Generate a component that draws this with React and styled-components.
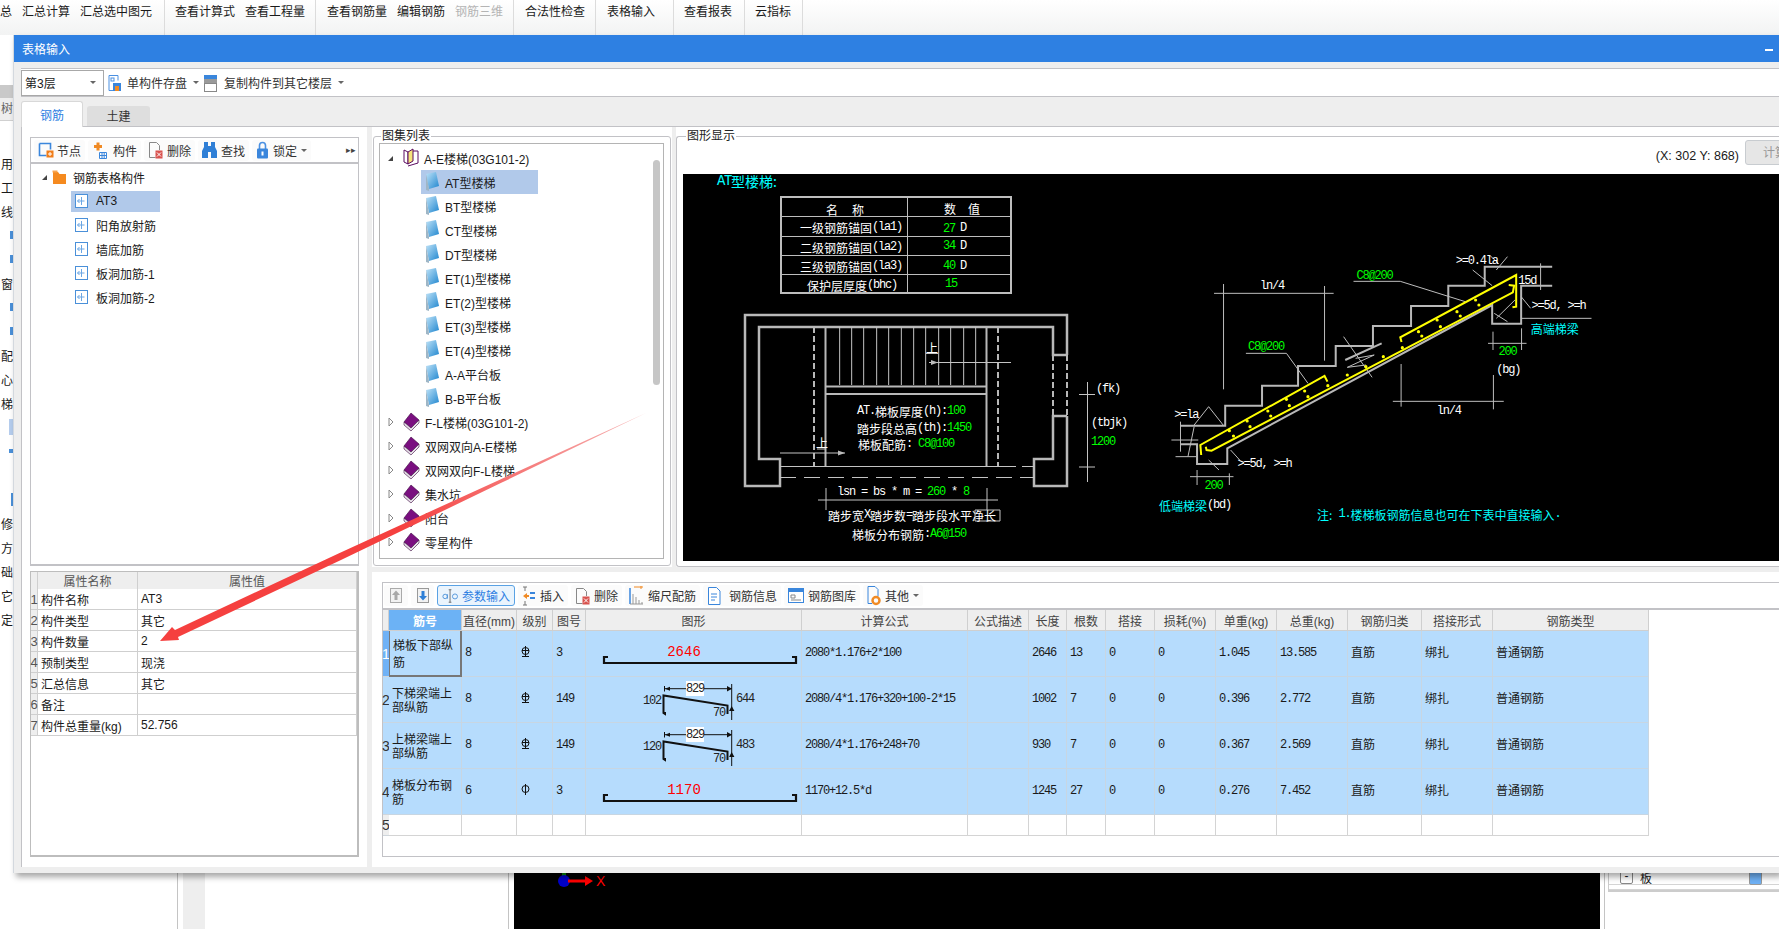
import styled, { createGlobalStyle } from 'styled-components';

const UI_FONT = '"Liberation Sans", "Noto Sans CJK SC", sans-serif';
const CJK_FONT = '"Noto Sans CJK SC", sans-serif';
const MONO_FONT = '"Liberation Mono", "Noto Sans CJK SC", monospace';
const LINE = '#c2c2c6';
const COLS = '6px 73px 55px 36px 33px 216px 166px 61px 38px 39px 49px 61px 61px 71px 74px 71px 156px';

const GlobalStyle = createGlobalStyle`
  html, body { margin: 0; padding: 0; width: 1779px; height: 929px; overflow: hidden; background: #fff; }
  body { font: 12px ${UI_FONT}; color: #1a1a1a; }
  * { box-sizing: border-box; }
`;

const Page = styled.div`
  position: relative;
  width: 1779px;
  height: 929px;
  overflow: hidden;
`;

/* main ribbon, behind the window */
const Ribbon = styled.div`
  display: flex;
  height: 35px;
  background: linear-gradient(#fff, #f2f3f3);
`;

const RibbonGroup = styled.div`
  display: flex;
  align-items: flex-start;
  gap: 10px;
  width: ${(p) => p.$w}px;
  padding: 4px 0 0 ${(p) => p.$pad}px;
  border-right: 1px solid #dcdcdc;
  white-space: nowrap;
  line-height: 16px;
`;

const RibbonItem = styled.span`
  color: ${(p) => (p.$off ? '#b4b4b4' : '#1a1a1a')};
`;

const Backdrop = styled.div`
  display: flex;
  height: 894px;
`;

const Sidebar = styled.div`
  width: 177px;
  display: flex;
  flex-direction: column;
`;

const SideGap = styled.div`
  height: 50px;
`;

const SideBand = styled.div`
  height: 13px;
  width: 13px;
  background: #c9c9c9;
`;

const SideHead = styled.div`
  height: 23px;
  width: 13px;
  background: #eee;
  border-bottom: 1px solid #d0d0d0;
  color: #666;
  line-height: 22px;
  text-align: right;
`;

const SideList = styled.div`
  width: 13px;
  padding-top: 30px;
`;

const SideRow = styled.div`
  height: 24px;
  display: flex;
  justify-content: flex-end;
  align-items: center;
  overflow: hidden;
  white-space: nowrap;
`;

const SideMark = styled.span`
  width: ${(p) => p.$w || 3}px;
  height: ${(p) => p.$h || 8}px;
  background: ${(p) => p.$c || '#4a90d9'};
`;

const BackGutter = styled.div`
  width: 28px;
  padding-left: 5px;
  border-left: 1px solid #c4c4c4;
  &::after {
    content: '';
    display: block;
    width: 22px;
    height: 100%;
    background: #eee;
  }
`;

const BackBlank = styled.div`
  width: 304px;
  border-right: 1px solid #c4c4c4;
`;

const BlackView = styled.div`
  position: relative;
  width: 1086px;
  margin-left: 5px;
  background: #000;
`;

const AxisMark = styled.svg`
  position: absolute;
  left: 36px;
  top: 836px;
`;

const AxisLabel = styled.span`
  position: absolute;
  left: 82px;
  top: 838px;
  color: #f00;
  font-size: 14px;
  line-height: 16px;
`;

const Dock = styled.div`
  flex: 1;
  margin-left: 4px;
  padding-left: 3px;
  border-left: 1px solid #c4c4c4;
`;

const DockTable = styled.div`
  height: 857px;
  display: flex;
  flex-direction: column;
  justify-content: flex-end;
  border-left: 1px solid #ccc;
  border-bottom: 2px solid #ccc;
`;

const DockRow = styled.div`
  display: flex;
  align-items: center;
  height: ${(p) => p.$h}px;
  padding-left: 11px;
  gap: 7px;
  border-bottom: 1px solid #d4d4d4;
`;

const DockBox = styled.span`
  width: 13px;
  height: 13px;
  border: 1px solid #888;
  border-radius: 2px;
  text-align: center;
  line-height: 8px;
`;

const DockCheck = styled.span`
  margin-left: 90px;
  width: 13px;
  height: 14px;
  background: #6fb1f5;
  border: 1px solid #999;
  border-radius: 2px;
`;

/* table-input window */
const Window = styled.div`
  position: absolute;
  left: 13px;
  top: 35px;
  right: 0;
  height: 838px;
  display: flex;
  flex-direction: column;
  background: #eee;
  border-left: 1px solid #d3d8de;
  box-shadow: 3px 4px 6px rgba(0, 0, 0, 0.35);
`;

const TitleBar = styled.div`
  height: 27px;
  flex: none;
  display: flex;
  justify-content: space-between;
  align-items: center;
  padding: 0 6px 0 8px;
  background: #2e80e2;
  color: #fff;
`;

const MinButton = styled.span`
  width: 8px;
  height: 2px;
  margin-top: 3px;
  background: #fff;
`;

const WindowBody = styled.div`
  flex: 1;
  min-height: 0;
  display: flex;
  flex-direction: column;
  padding: 6px 0 6px 7px;
`;

const LayerBar = styled.div`
  height: 29px;
  flex: none;
  display: flex;
  align-items: center;
  gap: 4px;
  background: #fff;
  border-top: 1px solid ${LINE};
  border-bottom: 1px solid ${LINE};
`;

const LayerSelect = styled.div`
  width: 83px;
  height: 26px;
  margin-right: 0;
  display: flex;
  align-items: center;
  justify-content: space-between;
  padding: 0 7px 0 3px;
  border: 1px solid #a8a8a8;
`;

const Caret = styled.span`
  width: 0;
  height: 0;
  flex: none;
  border-left: 3px solid transparent;
  border-right: 3px solid transparent;
  border-top: 3px solid #666;
`;

const BarAction = styled.div`
  display: flex;
  align-items: center;
  gap: 6px;
  white-space: nowrap;
  color: #333;
`;

const TabStrip = styled.div`
  height: 29px;
  flex: none;
  display: flex;
  align-items: flex-end;
  gap: 4px;
`;

const Tab = styled.div`
  width: ${(p) => (p.$active ? 62 : 63)}px;
  height: ${(p) => (p.$active ? 26 : 20)}px;
  margin-bottom: ${(p) => (p.$active ? -1 : 0)}px;
  text-align: center;
  line-height: ${(p) => (p.$active ? 28 : 22)}px;
  border-radius: 3px 3px 0 0;
  background: ${(p) => (p.$active ? '#fff' : '#dedede')};
  border: ${(p) => (p.$active ? `1px solid #d8d8d8` : 'none')};
  border-bottom: none;
  color: ${(p) => (p.$active ? '#2e80e2' : '#333')};
  position: relative;
  z-index: 1;
`;

const Content = styled.div`
  flex: 1;
  min-height: 0;
  display: flex;
  background: #fff;
  border-top: 1px solid ${LINE};
  border-left: 1px solid ${LINE};
`;

const LeftPane = styled.div`
  width: 345px;
  flex: none;
  display: flex;
  flex-direction: column;
  gap: 5px;
  padding: 10px 8px 10px 8px;
`;

const PaneStack = styled.div`
  flex: 1;
  min-height: 0;
  display: flex;
  flex-direction: column;
`;

const Splitter = styled.div`
  flex: none;
  background: #eee;
  ${(p) => (p.$row ? 'height: 5px;' : `width: ${p.$w || 5}px;`)}
`;

const SmallBar = styled.div`
  height: 27px;
  flex: none;
  display: flex;
  align-items: center;
  gap: 3px;
  padding-left: 3px;
  border: 1px solid ${LINE};
  border-bottom: 2px solid ${LINE};
  border-right: 1px solid ${LINE};
`;

const ToolButton = styled.div`
  height: 21px;
  display: flex;
  align-items: center;
  gap: ${(p) => p.$gap ?? 4}px;
  padding: 0 4px;
  border-radius: 3px;
  white-space: nowrap;
  color: ${(p) => (p.$active ? '#2e80e2' : '#333')};
  background: ${(p) => (p.$active ? '#eaf4fd' : '#fbfbfb')};
  border: ${(p) => (p.$active ? '1px solid #5aa2e4' : 'none')};
`;

const MoreMark = styled.span`
  margin-left: auto;
  margin-right: 2px;
  font-size: 9px;
  color: #444;
`;

const TreeBox = styled.div`
  flex: 1;
  min-height: 0;
  padding-top: 1px;
  border: 1px solid ${LINE};
  border-top: none;
  border-bottom-width: 2px;
`;

const TreeRow = styled.div`
  height: 24px;
  display: flex;
  align-items: center;
  padding-left: ${(p) => p.$indent}px;
  white-space: nowrap;
`;

const TreeItem = styled.div`
  display: flex;
  align-items: center;
  gap: ${(p) => p.$gap}px;
  height: ${(p) => p.$h}px;
  width: ${(p) => (p.$w ? `${p.$w}px` : 'auto')};
  padding-left: ${(p) => p.$pad ?? 4}px;
  background: ${(p) => (p.$selected ? '#b1c9ea' : 'transparent')};
`;

const PropBox = styled.div`
  height: 286px;
  flex: none;
  border: 1px solid #bdbdbd;
  border-width: 1px 2px 2px 1px;
`;

const PropRow = styled.div`
  display: grid;
  grid-template-columns: 7px 100px 1fr;
  height: ${(p) => (p.$head ? 17 : 21)}px;
`;

const PropCell = styled.div`
  display: flex;
  align-items: center;
  justify-content: ${(p) => (p.$center ? 'center' : 'flex-start')};
  padding-left: ${(p) => (p.$center ? 0 : 3)}px;
  background: ${(p) => (p.$shade ? '#eee' : '#fff')};
  color: ${(p) => (p.$shade ? '#555' : '#1a1a1a')};
  font-size: ${(p) => (p.$index ? 13 : 12)}px;
  border-right: 1px solid #cfcfcf;
  border-bottom: 1px solid #cfcfcf;
  white-space: nowrap;
`;

const TopArea = styled.div`
  height: 440px;
  flex: none;
  display: flex;
`;

const AtlasArea = styled.div`
  width: 300px;
  flex: none;
  padding: 9px 1px 1px;
`;

const Group = styled.div`
  position: relative;
  height: 100%;
  border: 1px solid ${LINE};
  border-radius: 3px;
  ${(p) => p.$open && 'border-right: none; border-radius: 3px 0 0 3px;'}
`;

const GroupTitle = styled.span`
  position: absolute;
  top: -9px;
  left: ${(p) => p.$left}px;
  height: 16px;
  padding: 0 1px;
  background: #fff;
  line-height: 16px;
  color: #222;
`;

const AtlasTree = styled.div`
  position: relative;
  margin: 6px 6px 6px 5px;
  height: calc(100% - 12px);
  padding-top: 2px;
  border: 1px solid #b4b4b4;
`;

const ScrollThumb = styled.div`
  position: absolute;
  top: 16px;
  right: 3px;
  width: 7px;
  height: 225px;
  border-radius: 4px;
  background: #c6c6c6;
`;

const GraphArea = styled.div`
  flex: 1;
  min-width: 0;
  padding-top: 9px;
`;

const GraphHead = styled.div`
  height: 37px;
  display: flex;
  justify-content: flex-end;
  align-items: center;
  gap: 6px;
  font-size: 12.5px;
  white-space: nowrap;
`;

const CalcButton = styled.div`
  width: 60px;
  height: 25px;
  flex: none;
  margin-right: -26px;
  margin-top: -6px;
  text-align: center;
  font-size: 12px;
  line-height: 24px;
  color: #999;
  background: #e6e6e6;
  border: 1px solid #c8ccd0;
  border-radius: 3px;
`;

const GraphStage = styled.div`
  height: 387px;
  margin-left: 6px;
  background: #000;
`;

const Canvas = styled.svg`
  display: block;
`;

const CadText = styled.text`
  font-family: ${CJK_FONT};
  font-size: ${(p) => p.$size || 12}px;
  fill: ${(p) => p.$fill || '#fff'};
  dominant-baseline: central;
`;

const Lat = styled.tspan`
  font-family: ${MONO_FONT};
  font-size: ${(p) => p.$size || 12}px;
  letter-spacing: ${(p) => (p.$size ? -1.4 : -1.2)}px;
  fill: ${(p) => p.$fill || 'inherit'};
`;

const LowerPane = styled.div`
  flex: 1;
  min-height: 0;
  padding: 10px 0 10px 10px;
`;

const RebarBox = styled.div`
  height: 100%;
  border: 1px solid ${LINE};
  border-right: none;
`;

const RebarBar = styled.div`
  height: 27px;
  display: flex;
  align-items: center;
  gap: 3px;
  padding-left: 1px;
  border-bottom: 2px solid ${LINE};
`;

const SquareButton = styled.div`
  width: ${(p) => p.$w}px;
  height: 21px;
  display: flex;
  align-items: center;
  justify-content: center;
  background: #fbfbfb;
  border-radius: 3px;
`;

const GridRow = styled.div`
  display: grid;
  grid-template-columns: ${COLS};
  width: 1266px;
  height: ${(p) => p.$h}px;
`;

const HeadCell = styled.div`
  display: flex;
  align-items: center;
  justify-content: center;
  font-family: ${UI_FONT};
  background: ${(p) => (p.$selected ? '#6cb2f5' : '#eee')};
  color: ${(p) => (p.$selected ? '#fff' : '#444')};
  font-weight: ${(p) => (p.$selected ? 700 : 400)};
  border-right: 1px solid #cfcfcf;
  border-bottom: 1px solid #cfcfcf;
  white-space: nowrap;
`;

const NumCell = styled.div`
  display: flex;
  align-items: center;
  justify-content: center;
  font-size: 14px;
  color: ${(p) => (p.$selected ? '#fff' : '#333')};
  background: ${(p) => (p.$selected ? '#70b2f6' : p.$blue ? '#b6dcfd' : '#eee')};
  border-bottom: 1px solid #cfd6dc;
`;

const Cell = styled.div`
  display: flex;
  align-items: center;
  padding: 0 0 ${(p) => (p.$mono ? 2 : 5)}px 3px;
  font-family: ${(p) => (p.$mono ? MONO_FONT : CJK_FONT)};
  letter-spacing: ${(p) => (p.$mono ? '-1.2px' : 'normal')};
  background: ${(p) => (p.$blue ? '#b6dcfd' : '#fff')};
  border-right: 1px solid ${(p) => (p.$blue ? '#c8d6e2' : '#d4d4d4')};
  border-bottom: 1px solid ${(p) => (p.$blue ? '#c8d6e2' : '#d4d4d4')};
  white-space: nowrap;
  overflow: hidden;
`;

const NameCell = styled.div`
  display: flex;
  align-items: center;
  padding: 0 6px 0 3px;
  font-family: ${CJK_FONT};
  line-height: ${(p) => (p.$selected ? 17 : 14)}px;
  background: ${(p) => (p.$blue ? '#b6dcfd' : '#fff')};
  border-right: ${(p) => (p.$selected ? '2px solid #777' : '1px solid #c8d6e2')};
  border-bottom: ${(p) => (p.$selected ? '2px solid #777' : '1px solid #c8d6e2')};
  border-left: ${(p) => (p.$selected ? '1px solid #777' : 'none')};
`;

const FigCell = styled.div`
  background: #b6dcfd;
  border-right: 1px solid #c8d6e2;
  border-bottom: 1px solid #c8d6e2;
  overflow: hidden;
`;

const FigText = styled.text`
  font-family: ${MONO_FONT};
  font-size: ${(p) => p.$size || 12}px;
  letter-spacing: ${(p) => (p.$size ? '0' : '-1.2px')};
  fill: ${(p) => p.$fill || '#222'};
  dominant-baseline: central;
  text-anchor: ${(p) => p.$anchor || 'start'};
`;

const ArrowLayer = styled.svg`
  position: absolute;
  left: 0;
  top: 0;
  pointer-events: none;
`;

/* small icons */
const Node = () => (
  <svg width="16" height="16" viewBox="0 0 16 16">
    <path d="M1.5 1.5h11v6M1.5 1.5v12h7" fill="none" stroke="#3a86dc" strokeWidth="1.6" />
    <rect x="8.5" y="8.5" width="7" height="7" fill="#f07d1a" />
    <path d="M12 10v4M10 12h4" stroke="#fff" />
  </svg>
);
const Piece = () => (
  <svg width="15" height="18" viewBox="0 0 15 18">
    <path d="M2 4h2.5V1.5h3V4H10v3H7.5v2.500h-3V7H2z" fill="#f08a24" />
    <path d="M7.500 11.500h7v6h-7zM7.500 14.500h7M10 11.500v6M12.200 11.500v6" fill="none" stroke="#3a86dc" />
  </svg>
);
const Remove = () => (
  <svg width="15" height="18" viewBox="0 0 15 18">
    <path d="M1.500 1.500h7l3 3V9M1.500 1.500v15h6" fill="none" stroke="#888" />
    <rect x="7.500" y="9.500" width="7" height="8" fill="#d9534f" />
    <path d="M9 11.500l4 4M13 11.500l-4 4" stroke="#fff" />
  </svg>
);
const Find = () => (
  <svg width="15" height="18" viewBox="0 0 15 18">
    <path d="M2 1h4v4h3V1h4v5l2 4v7H9V11H6v6H0v-7l2-4z" fill="#2f7fd6" />
  </svg>
);
const Lock = () => (
  <svg width="13" height="18" viewBox="0 0 13 18">
    <path d="M3.500 8V4.500a3 3 0 0 1 6 0V8" fill="none" stroke="#4a90e2" strokeWidth="1.600" />
    <rect x="1" y="7.500" width="11" height="10" rx="1" fill="#3a86dc" />
    <rect x="5.500" y="10.500" width="2" height="4" fill="#fff" />
  </svg>
);
const SaveDisk = () => (
  <svg width="13" height="18" viewBox="0 0 13 18">
    <path d="M1 1.500h9v5M1 1.500v15h5" fill="none" stroke="#4a90e2" />
    <rect x="3" y="4" width="3" height="3" fill="none" stroke="#4a90e2" />
    <rect x="5" y="9" width="8" height="8" fill="#3a86dc" />
    <rect x="7" y="12" width="4" height="5" fill="#f08a24" />
  </svg>
);
const CopyFloor = () => (
  <svg width="15" height="18" viewBox="0 0 15 18">
    <rect x="1" y="1" width="13" height="4" fill="#3a86dc" />
    <rect x="1" y="5" width="13" height="4" fill="#9a9a9a" />
    <rect x="1.500" y="9.500" width="12" height="8" fill="#fff" stroke="#888" />
  </svg>
);
const Folder = () => (
  <svg width="15" height="14" viewBox="0 0 15 14">
    <path d="M1 2h5l1.500 2H14v10H1z" fill="#f58a1f" />
    <path d="M0.500 0.500h5v2h-5z" fill="#f8a54f" />
  </svg>
);
const ChildIcon = () => (
  <svg width="13" height="14" viewBox="0 0 13 14">
    <rect x="0.500" y="0.500" width="12" height="13" fill="#fff" stroke="#4a90d9" />
    <path d="M6.500 3v8M2.500 7h7M2.500 7l2-2M2.500 7l2 2" fill="none" stroke="#6aa6e4" />
  </svg>
);
const DocIcon = () => (
  <svg width="14" height="20" viewBox="0 0 14 20">
    <defs>
      <linearGradient id="docFill" x1="0" y1="0" x2="1" y2="1">
        <stop offset="0" stopColor="#bfe3f8" />
        <stop offset="1" stopColor="#1f86cf" />
      </linearGradient>
    </defs>
    <path d="M1 2l10-2 3 14-10 3z" fill="url(#docFill)" />
    <path d="M1 2v16l3 1v-2z" fill="#9fb6c6" />
  </svg>
);
const BookClosed = () => (
  <svg width="17" height="20" viewBox="0 0 17 20">
    <path d="M8 1l8 7-8 8-7-6z" fill="#7a0f80" stroke="#3d0840" strokeWidth="0.600" />
    <path d="M1 10v3l7 6 8-8V8l-8 8z" fill="#e6e0e8" stroke="#3d0840" strokeWidth="0.600" />
  </svg>
);
const BookOpen = () => (
  <svg width="16" height="20" viewBox="0 0 16 20">
    <path d="M1 2l4 2v12l-4-2z" fill="#fff" stroke="#5a0a60" />
    <path d="M5 4l5-3v12l-5 3z" fill="#f5e27a" stroke="#5a0a60" />
    <path d="M10 3h5v12l-10 3" fill="none" stroke="#5a0a60" />
  </svg>
);
const Opened = () => (
  <svg width="7" height="7" viewBox="0 0 7 7">
    <path d="M6 1v5H1z" fill="#444" />
  </svg>
);
const Closed = () => (
  <svg width="6" height="10" viewBox="0 0 6 10">
    <path d="M1 1l4 4-4 4z" fill="#fff" stroke="#888" />
  </svg>
);
const MoveUp = () => (
  <svg width="12" height="15" viewBox="0 0 12 15">
    <rect x="0.500" y="0.500" width="11" height="14" fill="#f2f2f2" stroke="#aaa" />
    <path d="M6 2.500L10 7H7.500v5h-3V7H2z" fill="#a8a8a8" />
  </svg>
);
const MoveDown = () => (
  <svg width="12" height="15" viewBox="0 0 12 15">
    <rect x="0.500" y="0.500" width="11" height="14" fill="#f2f2f2" stroke="#999" />
    <path d="M6 12.500L10 8H7.500V3h-3v5H2z" fill="#2f7fd6" />
  </svg>
);
const ParamIcon = () => (
  <svg width="17" height="16" viewBox="0 0 19 16">
    <circle cx="3.500" cy="8.500" r="2.500" fill="none" stroke="#4a90d9" />
    <path d="M6 6v5" stroke="#4a90d9" />
    <path d="M9 1v14M7.500 1h3M7.500 15h3" stroke="#666" />
    <circle cx="14.500" cy="8.500" r="2.800" fill="none" stroke="#4a90d9" />
  </svg>
);
const InsertIcon = () => (
  <svg width="13" height="20" viewBox="0 0 13 20">
    <path d="M1 1h4M3 1v4M3 15v4M1 19h4" stroke="#777" />
    <path d="M1 10l4-3v2h2v2H5v2z" fill="#f08a24" />
    <path d="M8 7h5M8 12h5" stroke="#3a86dc" strokeWidth="2" />
  </svg>
);
const RulerIcon = () => (
  <svg width="15" height="19" viewBox="0 0 15 19">
    <path d="M5 1h9M12 0v3" stroke="#f08a24" />
    <path d="M1 2v16" stroke="#3a86dc" strokeWidth="1.500" />
    <path d="M4 8v10M7 11v7M10 14v4M13 16v2M1 18h13" stroke="#999" />
  </svg>
);
const InfoIcon = () => (
  <svg width="15" height="18" viewBox="0 0 15 18">
    <path d="M1.500 0.500h8l3.500 3.500v13.500h-11.500z" fill="#fff" stroke="#3a86dc" />
    <path d="M4 7h6M4 10h6M4 13h4" stroke="#3a86dc" />
  </svg>
);
const LibraryIcon = () => (
  <svg width="16" height="15" viewBox="0 0 16 15">
    <rect x="0.500" y="0.500" width="15" height="14" fill="#fff" stroke="#3a86dc" />
    <rect x="1" y="1" width="14" height="3" fill="#3a86dc" />
    <path d="M3 7h4v3H3zM3 12h10" fill="none" stroke="#888" />
  </svg>
);
const OtherIcon = () => (
  <svg width="14" height="20" viewBox="0 0 14 20">
    <path d="M1 0.500h7l3 3v7M1 0.500v17h4" fill="none" stroke="#3a86dc" />
    <circle cx="9" cy="14.500" r="3.500" fill="none" stroke="#f08a24" strokeWidth="2.500" />
  </svg>
);
const Grade = ({ foot }) => (
  <svg width="11" height="13" viewBox="0 0 11 13">
    <circle cx="5.500" cy="6" r="3.500" fill="none" stroke="#111" />
    <path d="M5.500 1v11" stroke="#111" />
    {foot && <path d="M2 11.500h7M2 5.500l7 0" stroke="#111" />}
  </svg>
);

const sideRows = [
  '用', '工', '线', 'm', 'm', '窗', 'm', 'm', '配', '心', '梯',
  'box', 'tick', '', 'bar', '修', '方', '础', '它', '定',
];
const ribbon = [
  { w: 165, pad: 0, items: ['总', '汇总计算', '汇总选中图元'] },
  { w: 151, pad: 10, items: ['查看计算式', '查看工程量'] },
  { w: 198, pad: 11, items: ['查看钢筋量', '编辑钢筋', '钢筋三维'] },
  { w: 82, pad: 11, items: ['合法性检查'] },
  { w: 78, pad: 11, items: ['表格输入'] },
  { w: 71, pad: 10, items: ['查看报表'] },
  { w: 58, pad: 10, items: ['云指标'] },
];
const leftTree = ['AT3', '阳角放射筋', '墙底加筋', '板洞加筋-1', '板洞加筋-2'];
const atlasDocs = ['AT型楼梯', 'BT型楼梯', 'CT型楼梯', 'DT型楼梯', 'ET(1)型楼梯', 'ET(2)型楼梯', 'ET(3)型楼梯', 'ET(4)型楼梯', 'A-A平台板', 'B-B平台板'];
const atlasBooks = ['F-L楼梯(03G101-2)', '双网双向A-E楼梯', '双网双向F-L楼梯', '集水坑', '阳台', '零星构件'];
const props = [
  ['构件名称', 'AT3'], ['构件类型', '其它'], ['构件数量', '2'], ['预制类型', '现浇'],
  ['汇总信息', '其它'], ['备注', ''], ['构件总重量(kg)', '52.756'],
];
const heads = ['筋号', '直径(mm)', '级别', '图号', '图形', '计算公式', '公式描述', '长度', '根数', '搭接', '损耗(%)', '单重(kg)', '总重(kg)', '钢筋归类', '搭接形式', '钢筋类型'];
const rebars = [
  { name: '梯板下部纵筋', d: 8, foot: true, no: 3, fig: { label: '2646' }, formula: '2080*1.176+2*100', len: 2646, num: 13, unit: '1.045', total: '13.585' },
  { name: '下梯梁端上部纵筋', d: 8, foot: true, no: 149, fig: { left: 102, right: 644 }, formula: '2080/4*1.176+320+100-2*15', len: 1002, num: 7, unit: '0.396', total: '2.772' },
  { name: '上梯梁端上部纵筋', d: 8, foot: true, no: 149, fig: { left: 120, right: 483 }, formula: '2080/4*1.176+248+70', len: 930, num: 7, unit: '0.367', total: '2.569' },
  { name: '梯板分布钢筋', d: 6, foot: false, no: 3, fig: { label: '1170' }, formula: '1170+12.5*d', len: 1245, num: 27, unit: '0.276', total: '7.452' },
];

const Figure = ({ fig }) => (
  <svg width="215" height="45" viewBox="0 0 215 45">
    {fig.label ? (
      <>
        <FigText x="98" y="21" $size={14} $fill="#f00" $anchor="middle">{fig.label}</FigText>
        <path d="M22 26h-4v6h192v-6h-4" fill="none" stroke="#111" strokeWidth="2.200" />
      </>
    ) : (
      <>
        <path d="M78.500 9v5.500M78.500 11.700h67M145.700 7v10" stroke="#111" fill="none" />
        <path d="M141 9l5 2.700-5 2.700zM79 11.700l5-2v4z" fill="#111" />
        <rect x="100" y="4" width="18" height="15" fill="#fff" />
        <FigText x="109" y="11.500" $anchor="middle">829</FigText>
        <path d="M79 35v2l-1.500-1V18.500l64 10V37" fill="none" stroke="#111" strokeWidth="2" />
        <FigText x="75" y="24" $anchor="end">{fig.left}</FigText>
        <FigText x="150" y="22">{fig.right}</FigText>
        <FigText x="127" y="36">70</FigText>
        <path d="M145.700 17v26" stroke="#111" />
        <path d="M143 34l2.700-5 2.700 5z" fill="#111" />
      </>
    )}
  </svg>
);

const stairPts = (pts) => pts.map(([x, y]) => `${1130 + x / 2.416},${120 + y / 3}`).join(' ');
const sx = (x) => 1130 + x / 2.416;
const sy = (y) => 120 + y / 3;

const PLAN_STEPS = [479, 515, 551, 590, 626, 664, 701, 737, 776, 812, 851, 887];
const STAIR_THIN = [
  [203, 520, 492, 520], [226, 492, 226, 808], [470, 498, 470, 722],
  [635, 844, 903, 844], [655, 732, 655, 860], [878, 765, 878, 868],
  [828, 450, 875, 497], [870, 407, 890, 430], [912, 410, 885, 450],
  [992, 430, 992, 510], [945, 595, 1115, 595], [945, 530, 968, 565],
  [880, 580, 912, 605], [930, 540, 885, 595], [877, 635, 877, 690],
  [946, 625, 946, 690], [865, 670, 958, 670], [122, 905, 122, 995],
  [100, 960, 165, 960], [110, 1010, 160, 1010], [155, 920, 140, 1010],
  [190, 1020, 215, 1050], [243, 990, 265, 1020], [162, 1050, 162, 1095],
  [240, 1060, 240, 1095], [145, 1070, 250, 1070], [516, 650, 585, 772],
];
const STAIR_DOTS = [
  [240, 932], [283, 903], [333, 873], [378, 838], [422, 813], [250, 948], [290, 920], [340, 888],
  [385, 857], [430, 830], [478, 797], [525, 765], [570, 740], [612, 710], [658, 683], [697, 635],
  [705, 648], [742, 600], [750, 620], [790, 575], [798, 588], [835, 540], [843, 555],
];

const StairDrawing = () => (
  <Canvas width="1096" height="387" viewBox="683 174 1096 387">
    <CadText x="717" y="181" $size={14} $fill="#0ff"><Lat $size={14}>AT</Lat>型楼梯:</CadText>

    {/* parameter table */}
    <g fill="none" stroke="#bdbdbd">
      <rect x="781" y="197" width="230" height="96" strokeWidth="2" />
      <path d="M907.500 197v96M781 216.500h230M781 236.500h230M781 255.500h230M781 274.500h230" />
    </g>
    <CadText x="826" y="209">名</CadText>
    <CadText x="852" y="209">称</CadText>
    <CadText x="944" y="208">数</CadText>
    <CadText x="968" y="208">值</CadText>
    <CadText x="800" y="227">一级钢筋锚固<Lat>(la1)</Lat></CadText>
    <CadText x="800" y="247">二级钢筋锚固<Lat>(la2)</Lat></CadText>
    <CadText x="800" y="266">三级钢筋锚固<Lat>(la3)</Lat></CadText>
    <CadText x="807" y="285">保护层厚度<Lat>(bhc)</Lat></CadText>
    <CadText x="943" y="229" $fill="#0f0"><Lat>27</Lat></CadText>
    <CadText x="943" y="246" $fill="#0f0"><Lat>34</Lat></CadText>
    <CadText x="943" y="266" $fill="#0f0"><Lat>40</Lat></CadText>
    <CadText x="945" y="284" $fill="#0f0"><Lat>15</Lat></CadText>
    <CadText x="960" y="228"><Lat>D</Lat></CadText>
    <CadText x="960" y="246"><Lat>D</Lat></CadText>
    <CadText x="960" y="266"><Lat>D</Lat></CadText>

    {/* plan view */}
    <g fill="none" stroke="#b8b8b8" strokeWidth="2.500">
      <path d="M1067 355V315H745V486H780V459H759V327H1053V355H1067" />
      <path d="M1067 416V486H1034V459H1053V416H1067" />
      <path d="M825.500 327V466M986.500 327V466" strokeWidth="2" />
      <path d="M826 386.500H987M826 394H987" strokeWidth="2" />
      <path d="M814 327V466M998 327V466M1053 355V416M1067 355V416" strokeWidth="2" strokeDasharray="6 3" />
    </g>
    <g stroke="#c4c4c4" fill="none">
      {PLAN_STEPS.map((x) => (
        <path key={x} d={`M${680 + x / 3} 327V385`} />
      ))}
      <path d="M929 362.500H1011M780 453H845M780 466.500H1016M1022 466.500H1034" />
      <path d="M780 477.500H1034" strokeDasharray="16 8" />
      <path d="M1087.500 382V482M1079 394.500H1095M1079 467H1095" />
      <path d="M826 488V510M987 488V510M818 500H998M926 353.500H938M817 449H826" />
      <path d="M975 510H1000V521H975z" />
    </g>
    <path d="M931 360l7 2.500-7 2.500zM838 450.500l7 2.500-7 2.500z" fill="#bbb" />
    <CadText x="926" y="347">上</CadText>
    <CadText x="816" y="442">上</CadText>
    <CadText x="857" y="411"><Lat>AT.</Lat>梯板厚度<Lat>(h):</Lat><Lat $fill="#0f0">100</Lat></CadText>
    <CadText x="857" y="428">踏步段总高<Lat>(th):</Lat><Lat $fill="#0f0">1450</Lat></CadText>
    <CadText x="858" y="444">梯板配筋<Lat>: </Lat><Lat $fill="#0f0">C8@100</Lat></CadText>
    <CadText x="1096" y="389"><Lat>(fk)</Lat></CadText>
    <CadText x="1091" y="423"><Lat>(tbjk)</Lat></CadText>
    <CadText x="1091" y="442" $fill="#0f0"><Lat>1200</Lat></CadText>
    <CadText x="837" y="492"><Lat>lsn = bs * m = </Lat><Lat $fill="#0f0">260</Lat><Lat> * </Lat><Lat $fill="#0f0">8</Lat></CadText>
    <CadText x="828" y="515">踏步宽<Lat>X</Lat>踏步数<Lat>=</Lat>踏步段水平净长</CadText>
    <CadText x="852" y="534">梯板分布钢筋<Lat>:</Lat><Lat $fill="#0f0">A6@150</Lat></CadText>

    {/* section view */}
    <g fill="none" stroke="#b8b8b8" strokeWidth="2">
      <polyline points={stairPts([[122, 917], [230, 917], [230, 857], [319, 857], [319, 797], [406, 797], [406, 738], [497, 738], [497, 678], [587, 678], [587, 618], [679, 618], [679, 558], [769, 558], [769, 497], [857, 497], [857, 440], [1020, 440]])} />
      <polyline points={stairPts([[1020, 497], [945, 497], [945, 611], [875, 611], [875, 555], [235, 985], [235, 1032], [162, 1032], [162, 973], [122, 973]])} />
      <polyline points={stairPts([[520, 720], [608, 670]])} />
    </g>
    <g fill="none" stroke="#bdbdbd">
      {STAIR_THIN.map(([a, b, c, d]) => (
        <line key={`${a}-${b}-${c}`} x1={sx(a)} y1={sy(b)} x2={sx(c)} y2={sy(d)} />
      ))}
      <polyline points={stairPts([[540, 484], [653, 484], [810, 545]])} />
      <polyline points={stairPts([[280, 700], [378, 700], [430, 790]])} />
      <polyline points={stairPts([[155, 915], [190, 860], [225, 915]])} />
      <polyline points={stairPts([[545, 715], [590, 705], [525, 742], [570, 735]])} />
    </g>
    <g fill="none" stroke="#ff0" strokeWidth="2">
      <polyline points={stairPts([[172, 1005], [170, 975], [470, 768], [477, 785]])} />
      <polyline points={stairPts([[183, 980], [185, 990], [197, 992], [925, 517], [928, 497], [915, 495]])} />
      <polyline points={stairPts([[656, 666], [653, 652], [933, 465], [933, 560], [924, 562]])} />
    </g>
    {STAIR_DOTS.map(([x, y]) => (
      <circle key={`${x}-${y}`} cx={sx(x)} cy={sy(y)} r="1.600" fill="#ff0" />
    ))}
    <CadText x={sx(343)} y={sy(497)} textAnchor="middle"><Lat>ln/4</Lat></CadText>
    <CadText x={sx(770)} y={sy(873)} textAnchor="middle"><Lat>ln/4</Lat></CadText>
    <CadText x={sx(547)} y={sy(468)} $fill="#0f0"><Lat>C8@200</Lat></CadText>
    <CadText x={sx(285)} y={sy(681)} $fill="#0f0"><Lat>C8@200</Lat></CadText>
    <CadText x={sx(787)} y={sy(423)}><Lat>{'>=0.4la'}</Lat></CadText>
    <CadText x={sx(938)} y={sy(483)}><Lat>15d</Lat></CadText>
    <CadText x={sx(970)} y={sy(558)}><Lat>{'>=5d, >=h'}</Lat></CadText>
    <CadText x={sx(968)} y={sy(625)} $fill="#0ff">高端梯梁</CadText>
    <CadText x={sx(890)} y={sy(696)} $fill="#0f0"><Lat>200</Lat></CadText>
    <CadText x={sx(885)} y={sy(750)}><Lat>(bg)</Lat></CadText>
    <CadText x={sx(107)} y={sy(885)}><Lat>{'>=la'}</Lat></CadText>
    <CadText x={sx(260)} y={sy(1032)}><Lat>{'>=5d, >=h'}</Lat></CadText>
    <CadText x={sx(180)} y={sy(1098)} $fill="#0f0"><Lat>200</Lat></CadText>
    <CadText x={sx(70)} y={sy(1155)} $fill="#0ff">低端梯梁<Lat $fill="#fff">(bd)</Lat></CadText>
    <CadText x={sx(452)} y={sy(1183)} $fill="#0ff">注:<Lat> 1.</Lat>楼梯板钢筋信息也可在下表中直接输入<Lat>.</Lat></CadText>
  </Canvas>
);

export default function App() {
  return (
    <Page>
      <GlobalStyle />
      <Ribbon>
        {ribbon.map((g) => (
          <RibbonGroup key={g.items[0]} $w={g.w} $pad={g.pad}>
            {g.items.map((t) => (
              <RibbonItem key={t} $off={t === '钢筋三维'}>{t}</RibbonItem>
            ))}
          </RibbonGroup>
        ))}
      </Ribbon>

      <Backdrop>
        <Sidebar>
          <SideGap />
          <SideBand />
          <SideHead>树</SideHead>
          <SideList>
            {sideRows.map((t, i) => (
              <SideRow key={i}>
                {t === 'm' && <SideMark />}
                {t === 'tick' && <SideMark $w={4} $h={4} />}
                {t === 'bar' && <SideMark $w={2} $h={13} />}
                {t === 'box' && <SideMark $w={4} $h={16} $c="#b5cdee" />}
                {!['m', 'tick', 'bar', 'box'].includes(t) && t}
              </SideRow>
            ))}
          </SideList>
        </Sidebar>
        <BackGutter />
        <BackBlank />
        <BlackView>
          <AxisMark width="46" height="20" viewBox="0 0 46 20">
            <rect x="12" y="0" width="4" height="6" fill="#0a8a0a" />
            <circle cx="14" cy="10" r="6" fill="#0000c8" />
            <path d="M18 8.500h17V5l8 5-8 5v-3.500H18z" fill="#f00" />
          </AxisMark>
          <AxisLabel>X</AxisLabel>
        </BlackView>
        <Dock>
          <DockTable>
            <DockRow $h={14}>
              <DockBox>-</DockBox>
              板
              <DockCheck />
            </DockRow>
            <DockRow $h={5} />
          </DockTable>
        </Dock>
      </Backdrop>

      <Window>
        <TitleBar>
          表格输入
          <MinButton />
        </TitleBar>
        <WindowBody>
          <LayerBar>
            <LayerSelect>
              第3层
              <Caret />
            </LayerSelect>
            <BarAction>
              <SaveDisk />
              单构件存盘
              <Caret />
            </BarAction>
            <BarAction>
              <CopyFloor />
              复制构件到其它楼层
              <Caret />
            </BarAction>
          </LayerBar>
          <TabStrip>
            <Tab $active>钢筋</Tab>
            <Tab>土建</Tab>
          </TabStrip>
          <Content>
            <LeftPane>
              <PaneStack>
                <SmallBar>
                  <ToolButton $gap={3}><Node />节点</ToolButton>
                  <ToolButton $gap={6}><Piece />构件</ToolButton>
                  <ToolButton><Remove />删除</ToolButton>
                  <ToolButton><Find />查找</ToolButton>
                  <ToolButton><Lock />锁定<Caret /></ToolButton>
                  <MoreMark>▸▸</MoreMark>
                </SmallBar>
                <TreeBox>
                  <TreeRow $indent={10}>
                    <Opened />
                    <TreeItem $gap={6} $h={21}>
                      <Folder />
                      钢筋表格构件
                    </TreeItem>
                  </TreeRow>
                  {leftTree.map((t, i) => (
                    <TreeRow key={t} $indent={40}>
                      <TreeItem $gap={8} $h={21} $selected={i === 0} $w={i === 0 ? 89 : undefined}>
                        <ChildIcon />
                        {t}
                      </TreeItem>
                    </TreeRow>
                  ))}
                </TreeBox>
              </PaneStack>
              <PropBox>
                <PropRow $head>
                  <PropCell $shade />
                  <PropCell $shade $center>属性名称</PropCell>
                  <PropCell $shade $center>属性值</PropCell>
                </PropRow>
                {props.map(([k, v], i) => (
                  <PropRow key={k}>
                    <PropCell $shade $center $index>{i + 1}</PropCell>
                    <PropCell>{k}</PropCell>
                    <PropCell>{v}</PropCell>
                  </PropRow>
                ))}
              </PropBox>
            </LeftPane>
            <Splitter />
            <PaneStack>
              <TopArea>
                <AtlasArea>
                  <Group>
                    <GroupTitle $left={7}>图集列表</GroupTitle>
                    <AtlasTree>
                      <ScrollThumb />
                      <TreeRow $indent={7}>
                        <Opened />
                        <TreeItem $gap={5} $h={24} $pad={9}>
                          <BookOpen />
                          A-E楼梯(03G101-2)
                        </TreeItem>
                      </TreeRow>
                      {atlasDocs.map((t, i) => (
                        <TreeRow key={t} $indent={41}>
                          <TreeItem $gap={6} $h={24} $selected={i === 0} $w={i === 0 ? 117 : undefined}>
                            <DocIcon />
                            {t}
                          </TreeItem>
                        </TreeRow>
                      ))}
                      {atlasBooks.map((t) => (
                        <TreeRow key={t} $indent={8}>
                          <Closed />
                          <TreeItem $gap={5} $h={24} $pad={9}>
                            <BookClosed />
                            {t}
                          </TreeItem>
                        </TreeRow>
                      ))}
                    </AtlasTree>
                  </Group>
                </AtlasArea>
                <Splitter $w={4} />
                <GraphArea>
                  <Group $open>
                    <GroupTitle $left={9}>图形显示</GroupTitle>
                    <GraphHead>
                      (X: 302 Y: 868)
                      <CalcButton>计算</CalcButton>
                    </GraphHead>
                    <GraphStage>
                      <StairDrawing />
                    </GraphStage>
                  </Group>
                </GraphArea>
              </TopArea>
              <Splitter $row />
              <LowerPane>
                <RebarBox>
                  <RebarBar>
                    <SquareButton $w={24}><MoveUp /></SquareButton>
                    <SquareButton $w={23}><MoveDown /></SquareButton>
                    <ToolButton $active $gap={3}><ParamIcon />参数输入</ToolButton>
                    <ToolButton $gap={5}><InsertIcon />插入</ToolButton>
                    <ToolButton><Remove />删除</ToolButton>
                    <ToolButton><RulerIcon />缩尺配筋</ToolButton>
                    <ToolButton $gap={7}><InfoIcon />钢筋信息</ToolButton>
                    <ToolButton><LibraryIcon />钢筋图库</ToolButton>
                    <ToolButton><OtherIcon />其他<Caret /></ToolButton>
                  </RebarBar>
                  <GridRow $h={21}>
                    <HeadCell />
                    {heads.map((h, i) => (
                      <HeadCell key={h} $selected={i === 0}>{h}</HeadCell>
                    ))}
                  </GridRow>
                  {rebars.map((r, i) => (
                    <GridRow key={r.name} $h={46}>
                      <NumCell $blue $selected={i === 0}>{i + 1}</NumCell>
                      <NameCell $blue $selected={i === 0}>{r.name}</NameCell>
                      <Cell $blue $mono>{r.d}</Cell>
                      <Cell $blue><Grade foot={r.foot} /></Cell>
                      <Cell $blue $mono>{r.no}</Cell>
                      <FigCell><Figure fig={r.fig} /></FigCell>
                      <Cell $blue $mono>{r.formula}</Cell>
                      <Cell $blue />
                      <Cell $blue $mono>{r.len}</Cell>
                      <Cell $blue $mono>{r.num}</Cell>
                      <Cell $blue $mono>0</Cell>
                      <Cell $blue $mono>0</Cell>
                      <Cell $blue $mono>{r.unit}</Cell>
                      <Cell $blue $mono>{r.total}</Cell>
                      <Cell $blue>直筋</Cell>
                      <Cell $blue>绑扎</Cell>
                      <Cell $blue>普通钢筋</Cell>
                    </GridRow>
                  ))}
                  <GridRow $h={21}>
                    <NumCell>5</NumCell>
                    {heads.map((h) => (
                      <Cell key={h} />
                    ))}
                  </GridRow>
                </RebarBox>
              </LowerPane>
            </PaneStack>
          </Content>
        </WindowBody>
      </Window>

      <ArrowLayer width="1779" height="929" viewBox="0 0 1779 929">
        <defs>
          <linearGradient id="markFade" gradientUnits="userSpaceOnUse" x1="646" y1="413" x2="400" y2="530">
            <stop offset="0" stopColor="#f6b6b6" />
            <stop offset="1" stopColor="#f5403f" />
          </linearGradient>
        </defs>
        <path d="M160 641L172 627L175 630L338.500 553.400L499.200 479.900L646 413L500.800 483.100L341.500 559.800L178 637L179 640Z" fill="url(#markFade)" />
      </ArrowLayer>
    </Page>
  );
}
